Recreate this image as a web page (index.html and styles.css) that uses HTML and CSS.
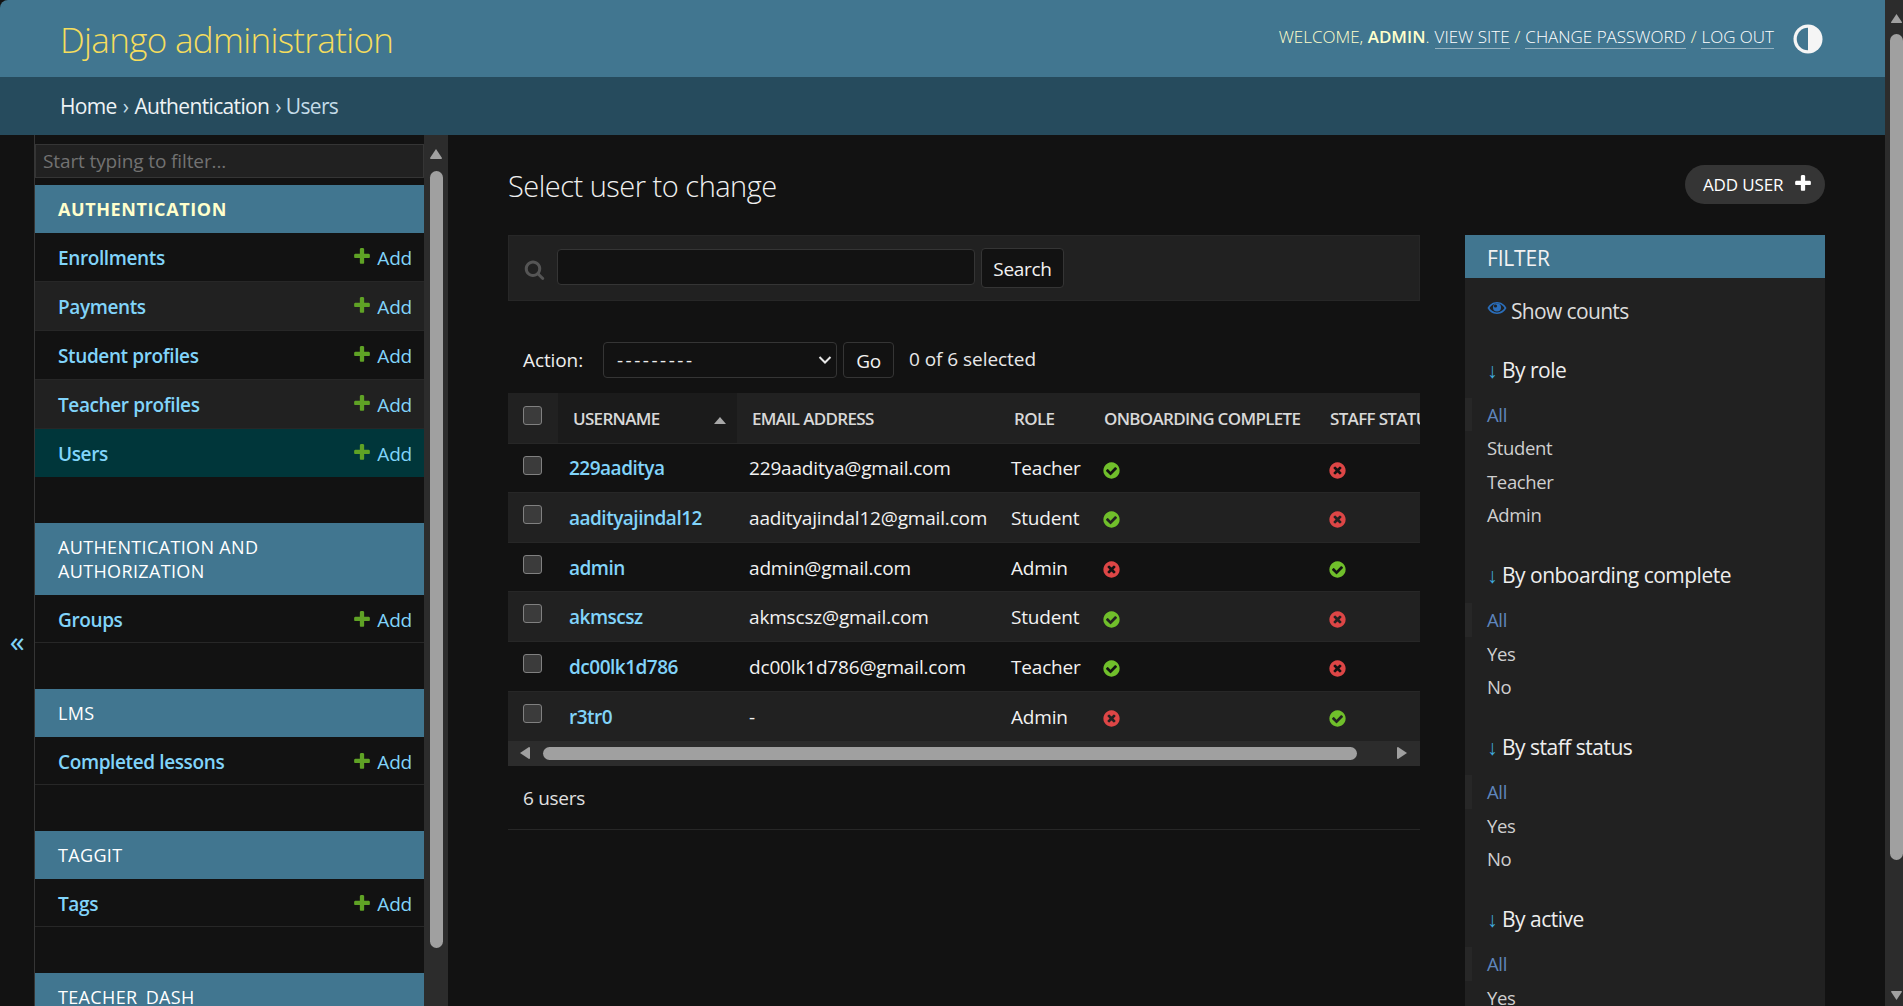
FILE: index.html
```html
<!DOCTYPE html>
<html lang="en">
<head>
<meta charset="utf-8">
<title>Select user to change | Django site admin</title>
<link rel="stylesheet" href="styles.css">
</head>
<body>
<svg class="sprite" aria-hidden="true">
  <symbol id="yes" viewBox="0 0 1792 1792"><path fill="#70bf2b" d="M1412 734q0-28-18-46l-91-90q-19-19-45-19t-45 19l-408 407-226-226q-19-19-45-19t-45 19l-91 90q-18 18-18 46 0 27 18 45l362 362q19 19 45 19 27 0 46-19l543-543q18-18 18-45zm252 162q0 209-103 385.5t-279.5 279.5-385.5 103-385.5-103-279.5-279.5-103-385.5 103-385.5 279.5-279.5 385.5-103 385.5 103 279.5 279.5 103 385.5z"/></symbol>
  <symbol id="no" viewBox="0 0 1792 1792"><path fill="#dd4646" d="M1277 1122q0-26-19-45l-181-181 181-181q19-19 19-45 0-27-19-46l-90-90q-19-19-46-19-26 0-45 19l-181 181-181-181q-19-19-45-19-27 0-46 19l-90 90q-19 19-19 46 0 26 19 45l181 181-181 181q-19 19-19 45 0 27 19 46l90 90q19 19 46 19 26 0 45-19l181-181 181 181q19 19 45 19 27 0 46-19l90-90q19-19 19-46zm387-226q0 209-103 385.5t-279.5 279.5-385.5 103-385.5-103-279.5-279.5-103-385.5 103-385.5 279.5-279.5 385.5-103 385.5 103 279.5 279.5 103 385.5z"/></symbol>
  <symbol id="plus" viewBox="0 0 1792 1792"><path d="M1600 796v192q0 40-28 68t-68 28h-416v416q0 40-28 68t-68 28h-192q-40 0-68-28t-28-68v-416h-416q-40 0-68-28t-28-68v-192q0-40 28-68t68-28h416v-416q0-40 28-68t68-28h192q40 0 68 28t28 68v416h416q40 0 68 28t28 68z"/></symbol>
</svg>

<div class="window">
  <div class="page">
    <header class="header">
      <div class="branding">Django administration</div>
      <div class="user-tools">
        <span>Welcome, <strong>admin</strong>.</span>
        <a href="#">View site</a><span>/</span><a href="#">Change password</a><span>/</span><a href="#">Log out</a>
        <svg class="theme" viewBox="0 0 32 32"><circle cx="16" cy="16" r="15.500" fill="#f5f5f5"/><path d="M16 4a12 12 0 0 0 0 24z" fill="#417690"/></svg>
      </div>
    </header>
    <nav class="crumbs"><a href="#">Home</a> › <a href="#">Authentication</a> › Users</nav>

    <div class="main">
      <div class="toggle"><span>«</span></div>
      <aside class="sidebar">
        <input class="nav-filter" type="text" placeholder="Start typing to filter...">
        <section class="app app-current">
          <h2 class="caption">Authentication</h2>
          <div class="row"><a href="#" class="name">Enrollments</a><a href="#" class="add"><svg class="plus"><use href="#plus"/></svg>Add</a></div>
          <div class="row alt"><a href="#" class="name">Payments</a><a href="#" class="add"><svg class="plus"><use href="#plus"/></svg>Add</a></div>
          <div class="row"><a href="#" class="name">Student profiles</a><a href="#" class="add"><svg class="plus"><use href="#plus"/></svg>Add</a></div>
          <div class="row alt"><a href="#" class="name">Teacher profiles</a><a href="#" class="add"><svg class="plus"><use href="#plus"/></svg>Add</a></div>
          <div class="row current"><a href="#" class="name">Users</a><a href="#" class="add"><svg class="plus"><use href="#plus"/></svg>Add</a></div>
        </section>
        <section class="app">
          <h2 class="caption">Authentication and Authorization</h2>
          <div class="row single"><a href="#" class="name">Groups</a><a href="#" class="add"><svg class="plus"><use href="#plus"/></svg>Add</a></div>
        </section>
        <section class="app">
          <h2 class="caption">LMS</h2>
          <div class="row single"><a href="#" class="name">Completed lessons</a><a href="#" class="add"><svg class="plus"><use href="#plus"/></svg>Add</a></div>
        </section>
        <section class="app">
          <h2 class="caption">Taggit</h2>
          <div class="row single"><a href="#" class="name">Tags</a><a href="#" class="add"><svg class="plus"><use href="#plus"/></svg>Add</a></div>
        </section>
        <section class="app">
          <h2 class="caption">Teacher_dash</h2>
        </section>
      </aside>
      <div class="vbar side-bar">
        <svg class="arrow" viewBox="0 0 14 12"><path d="M7 1 13 10a1 1 0 0 1-1 1H2a1 1 0 0 1-1-1z"/></svg>
        <div class="thumb"></div>
      </div>

      <main class="content">
        <div class="title-row">
          <h1>Select user to change</h1>
          <a href="#" class="addlink">Add user<svg class="plus"><use href="#plus"/></svg></a>
        </div>
        <div class="changelist">
          <div class="results-col">
            <form class="toolbar">
              <svg class="search-icon" viewBox="0 0 1792 1792"><path d="M1216 832q0-185-131.500-316.500t-316.500-131.500-316.500 131.500-131.500 316.500 131.500 316.500 316.500 131.500 316.500-131.500 131.500-316.500zm512 832q0 52-38 90t-90 38q-54 0-90-38l-343-342q-179 124-399 124-143 0-273.500-55.500t-225-150-150-225-55.500-273.500 55.500-273.500 150-225 225-150 273.500-55.500 273.500 55.500 225 150 150 225 55.500 273.500q0 220-124 399l343 343q37 37 37 90z"/></svg>
              <input class="search-input" type="text">
              <button class="btn search-btn" type="button">Search</button>
            </form>
            <div class="actions">
              <label class="action-label">Action:</label>
              <div class="select-wrap">
                <select class="action-select"><option>---------</option></select>
                <svg class="chevron" viewBox="0 0 14 10"><path d="M1.500 2 7 7.500 12.500 2" fill="none" stroke="#e8e8e8" stroke-width="2"/></svg>
              </div>
              <button class="btn go-btn" type="button">Go</button>
              <span class="counter">0 of 6 selected</span>
            </div>
            <div class="table-wrap">
              <table class="results">
                <colgroup><col class="c-check"><col class="c-user"><col class="c-email"><col class="c-role"><col class="c-onb"><col class="c-staff"></colgroup>
                <thead>
                  <tr>
                    <th class="check-cell"><input class="check" type="checkbox"></th>
                    <th class="sorted"><span class="sort-inner">Username<i class="sort-up"></i></span></th>
                    <th>Email address</th>
                    <th>Role</th>
                    <th>Onboarding complete</th>
                    <th>Staff status</th>
                  </tr>
                </thead>
                <tbody>
                  <tr><td class="check-cell"><input class="check" type="checkbox"></td><td><a href="#" class="user">229aaditya</a></td><td>229aaditya@gmail.com</td><td>Teacher</td><td><svg class="bool"><use href="#yes"/></svg></td><td><svg class="bool"><use href="#no"/></svg></td></tr>
                  <tr><td class="check-cell"><input class="check" type="checkbox"></td><td><a href="#" class="user">aadityajindal12</a></td><td>aadityajindal12@gmail.com</td><td>Student</td><td><svg class="bool"><use href="#yes"/></svg></td><td><svg class="bool"><use href="#no"/></svg></td></tr>
                  <tr><td class="check-cell"><input class="check" type="checkbox"></td><td><a href="#" class="user">admin</a></td><td>admin@gmail.com</td><td>Admin</td><td><svg class="bool"><use href="#no"/></svg></td><td><svg class="bool"><use href="#yes"/></svg></td></tr>
                  <tr><td class="check-cell"><input class="check" type="checkbox"></td><td><a href="#" class="user">akmscsz</a></td><td>akmscsz@gmail.com</td><td>Student</td><td><svg class="bool"><use href="#yes"/></svg></td><td><svg class="bool"><use href="#no"/></svg></td></tr>
                  <tr><td class="check-cell"><input class="check" type="checkbox"></td><td><a href="#" class="user">dc00lk1d786</a></td><td>dc00lk1d786@gmail.com</td><td>Teacher</td><td><svg class="bool"><use href="#yes"/></svg></td><td><svg class="bool"><use href="#no"/></svg></td></tr>
                  <tr><td class="check-cell"><input class="check" type="checkbox"></td><td><a href="#" class="user">r3tr0</a></td><td>-</td><td>Admin</td><td><svg class="bool"><use href="#no"/></svg></td><td><svg class="bool"><use href="#yes"/></svg></td></tr>
                </tbody>
              </table>
            </div>
            <div class="hbar">
              <svg class="harrow" viewBox="0 0 12 14"><path d="M1 7 10 1a1 1 0 0 1 1 1v10a1 1 0 0 1-1 1z"/></svg>
              <div class="hthumb"></div>
              <svg class="harrow" viewBox="0 0 12 14"><path d="M11 7 2 13a1 1 0 0 1-1-1V2a1 1 0 0 1 1-1z"/></svg>
            </div>
            <p class="paginator">6 users</p>
          </div>

          <aside class="filter">
            <h2 class="filter-head">Filter</h2>
            <div class="counts"><svg class="eye" viewBox="0 0 20 14"><path d="M10 1C5.500 1 2 4 .5 7 2 10 5.500 13 10 13s8-3 9.500-6C18 4 14.500 1 10 1zm0 1.600c3.300 0 6 2 7.500 4.400-1.500 2.400-4.200 4.400-7.500 4.400S4 9.400 2.500 7C4 4.600 6.700 2.600 10 2.600z" fill="#2a6ebb"/><circle cx="10" cy="6.500" r="4" fill="#2a6ebb"/><circle cx="8.500" cy="5" r="1.600" fill="#212121"/></svg>Show counts</div>
            <h3 class="filter-title"><span class="down">↓</span> By role</h3>
            <ul class="choices"><li class="selected"><a href="#">All</a></li><li><a href="#">Student</a></li><li><a href="#">Teacher</a></li><li><a href="#">Admin</a></li></ul>
            <h3 class="filter-title"><span class="down">↓</span> By onboarding complete</h3>
            <ul class="choices"><li class="selected"><a href="#">All</a></li><li><a href="#">Yes</a></li><li><a href="#">No</a></li></ul>
            <h3 class="filter-title"><span class="down">↓</span> By staff status</h3>
            <ul class="choices"><li class="selected"><a href="#">All</a></li><li><a href="#">Yes</a></li><li><a href="#">No</a></li></ul>
            <h3 class="filter-title"><span class="down">↓</span> By active</h3>
            <ul class="choices"><li class="selected"><a href="#">All</a></li><li><a href="#">Yes</a></li></ul>
          </aside>
        </div>
      </main>
    </div>
  </div>
  <div class="vbar page-bar">
    <svg class="arrow" viewBox="0 0 14 12"><path d="M7 1 13 10a1 1 0 0 1-1 1H2a1 1 0 0 1-1-1z"/></svg>
    <div class="thumb"></div>
    <svg class="arrow arrow-down" viewBox="0 0 14 12"><path d="M7 11 1 2a1 1 0 0 1 1-1h10a1 1 0 0 1 1 1z"/></svg>
  </div>
</div>
</body>
</html>
```
FILE: styles.css
```css
* { box-sizing: border-box; }
html, body { margin: 0; height: 100%; overflow: hidden; }
body {
  background: #121212;
  color: #eeeeee;
  font-family: "Open Sans", "Noto Sans", sans-serif;
  font-size: 19px;
  letter-spacing: -0.35px;
}
a { color: inherit; text-decoration: none; }
h1, h2, h3, p, ul { margin: 0; padding: 0; font: inherit; }
ul { list-style: none; }
.sprite { display: none; }

.window { display: flex; height: 1006px; }
.page { flex: 1; min-width: 0; display: flex; flex-direction: column; }

.header {
  height: 77px;
  flex: none;
  background: #417690;
  border-top-left-radius: 8px;
  display: flex;
  align-items: center;
  justify-content: space-between;
  padding: 0 62px 0 60px;
}
.branding { font-size: 35px; font-weight: 300; color: #f5dd5d; letter-spacing: -0.67px; margin-top: 1px; }
.user-tools {
  display: flex;
  align-items: center;
  gap: 5px;
  font-size: 17px;
  font-weight: 300;
  text-transform: uppercase;
  color: #ffffcc;
  letter-spacing: 0;
  margin-top: -5px;
}
.user-tools strong { font-weight: 600; }
.user-tools a { color: #fff; border-bottom: 1px solid rgba(255,255,255,.45); line-height: 22px; margin-top: 2px; }
.theme { width: 30px; height: 30px; margin: 5px 0 0 14px; }

.crumbs {
  height: 58px;
  flex: none;
  background: #264b5d;
  color: #c4dce8;
  padding-left: 60px;
  display: flex;
  align-items: center;
  gap: 6px;
  font-size: 21px;
  font-weight: 400;
  letter-spacing: -0.65px;
}
.crumbs a { color: #eef3f6; }

.main { flex: 1; min-height: 0; display: flex; }
.toggle {
  width: 35px;
  flex: none;
  border-right: 1px solid #353535;
  color: #81d4fa;
  display: flex;
  align-items: flex-start;
  justify-content: center;
  font-size: 30px;
  line-height: 40px;
  padding-top: 486px;
}
.sidebar {
  width: 389px;
  flex: none;
  padding-top: 9px;
  overflow: hidden;
}
.nav-filter {
  display: block;
  width: 389px;
  height: 34px;
  margin-bottom: 7px;
  padding: 0 7px;
  background: #212121;
  border: 1px solid #353535;
  color: #eee;
  font: inherit;
  letter-spacing: -0.12px;
}
.nav-filter::placeholder { color: #727272; opacity: 1; }

.app { margin-bottom: 46px; }
.caption {
  background: #417690;
  color: #fff;
  font-size: 18px;
  line-height: 24px;
  letter-spacing: 0.35px;
  text-transform: uppercase;
  padding: 12px 23px;
}
.app-current .caption { font-weight: 700; color: #ffffcc; letter-spacing: 0.6px; }
.row {
  height: 49px;
  display: flex;
  align-items: center;
  justify-content: space-between;
  padding: 1px 12px 0 23px;
  border-bottom: 1px solid #272727;
}
.row.alt { background: #212121; }
.row.current { background: #00363a; height: 48px; border-bottom: 0; }
.row.single { height: 48px; padding-top: 3px; }
.name { color: #81d4fa; font-weight: 600; letter-spacing: -0.38px; }
.add { color: #81d4fa; display: flex; align-items: center; gap: 5px; letter-spacing: -0.2px; }
.add .plus { width: 20px; height: 20px; fill: #5fa225; margin-top: -3px; }

.vbar { flex: none; background: #2c2c2c; display: flex; flex-direction: column; align-items: center; }
.arrow { fill: #a0a0a0; display: block; flex: none; }
.thumb { background: #a0a0a0; border-radius: 7px; flex: none; }
.side-bar { width: 24px; padding-top: 13px; }
.side-bar .arrow { width: 14px; height: 12px; }
.side-bar .thumb { width: 13px; height: 777px; margin-top: 11px; }
.page-bar { width: 18px; padding: 13px 0 5px 5px; align-items: flex-start; }
.page-bar .arrow { width: 13px; height: 11px; }
.page-bar .thumb { width: 13px; height: 826px; margin-top: 10px; border-radius: 7px; }
.page-bar .arrow-down { margin-top: auto; }

.content { flex: 1; min-width: 0; padding: 30px 60px 0; overflow: hidden; }
.title-row { height: 39px; display: flex; align-items: center; justify-content: space-between; margin-bottom: 31px; }
.title-row h1 { font-size: 29px; font-weight: 300; letter-spacing: -0.5px; color: #f0f0f0; padding-top: 2px; }
.addlink {
  height: 39px;
  width: 140px;
  border-radius: 20px;
  background: #353535;
  color: #fff;
  font-size: 17px;
  text-transform: uppercase;
  display: flex;
  align-items: center;
  padding-left: 18px;
  gap: 10px;
  letter-spacing: -0.15px;
}
.addlink .plus { width: 20px; height: 20px; fill: #fff; margin-top: -3px; }

.changelist { display: flex; gap: 45px; align-items: flex-start; }
.results-col { width: 912px; flex: none; }
.toolbar {
  height: 66px;
  background: #212121;
  border: 1px solid #272727;
  display: flex;
  align-items: center;
  padding: 0 0 0 15px;
  margin-bottom: 41px;
}
.search-icon { width: 21px; height: 21px; fill: #555; margin-right: 12px; margin-top: 3px; }
.search-input {
  width: 418px;
  height: 36px;
  background: #121212;
  border: 1px solid #353535;
  border-radius: 4px;
  margin: -3px 6px 0 0;
}
.btn {
  background: #121212;
  color: #f2f2f2;
  border: 1px solid #353535;
  border-radius: 4px;
  font: inherit;
  letter-spacing: -0.3px;
  padding: 1px 0 0;
}
.search-btn { width: 83px; height: 40px; }

.actions { height: 36px; display: flex; align-items: center; padding-left: 15px; margin-bottom: 15px; }
.action-label { width: 80px; flex: none; color: #eee; letter-spacing: -0.1px; }
.select-wrap { position: relative; width: 234px; height: 36px; margin-right: 6px; }
.action-select {
  appearance: none;
  width: 100%;
  height: 100%;
  background: #121212;
  color: #eee;
  border: 1px solid #353535;
  border-radius: 4px;
  font: inherit;
  letter-spacing: 2.5px;
  padding: 0 0 0 13px;
}
.chevron { position: absolute; right: 5px; top: 13px; width: 14px; height: 10px; }
.go-btn { width: 51px; height: 36px; margin-right: 15px; }
.counter { margin-top: -3px; color: #e8e8e8; letter-spacing: -0.05px; }

.table-wrap { overflow: hidden; width: 912px; }
.results { table-layout: fixed; border-collapse: collapse; width: 1120px; font-size: 19px; letter-spacing: -0.17px; }
.c-check { width: 50px; }
.c-user { width: 179px; }
.c-email { width: 262px; }
.c-role { width: 90px; }
.c-onb { width: 226px; }
.c-staff { width: 313px; }
.results th {
  height: 50px;
  background: #212121;
  border-bottom: 1px solid #272727;
  text-align: left;
  padding: 2px 0 0 15px;
  font-size: 17px;
  font-weight: 600;
  color: #d8d8d8;
  text-transform: uppercase;
  white-space: nowrap;
  letter-spacing: -0.68px;
}
.results th.sorted { background: #1b1b1b; padding-right: 11px; }
.sort-inner { display: flex; align-items: center; justify-content: space-between; }
.sort-up { width: 0; height: 0; border: 6.5px solid transparent; border-top: 0; border-bottom: 7px solid #a8a8a8; margin-top: 3px; }
.results th.check-cell, .results td.check-cell { padding: 0 0 0 15px; vertical-align: top; }
.results td {
  height: 49.67px;
  padding: 1px 0 0 12px;
  border-bottom: 1px solid #272727;
  white-space: nowrap;
  color: #f2f2f2;
}
.results tbody tr:nth-child(even) td { background: #212121; }
.results tbody tr:last-child td { border-bottom: 0; }
.user { color: #81d4fa; font-weight: 600; letter-spacing: -0.5px; margin-left: -1px; }
.check {
  appearance: none;
  display: block;
  width: 19px;
  height: 19px;
  margin: 12px 0 0;
  background: #3b3b3b;
  border: 1.5px solid #808080;
  border-radius: 3px;
}
.results th .check { margin-top: 13px; }
.bool { width: 19px; height: 19px; display: block; margin: 4px 0 0 1px; }

.hbar { height: 25px; background: #2c2c2c; display: flex; align-items: center; padding: 0 12px 0 11px; }
.harrow { width: 12px; height: 14px; fill: #a0a0a0; flex: none; }
.hthumb { width: 814px; height: 13px; background: #a0a0a0; border-radius: 7px; margin: 0 auto 0 12px; }

.paginator { height: 64px; line-height: 65px; padding-left: 15px; border-bottom: 1px solid #272727; color: #e0e0e0; letter-spacing: -0.3px; }

.filter {
  width: 360px;
  flex: none;
  height: 771px;
  background: #212121;
  overflow: hidden;
}
.filter-head {
  height: 43px;
  line-height: 47px;
  background: #417690;
  color: #f2f2f2;
  font-size: 21px;
  text-transform: uppercase;
  padding-left: 22px;
  letter-spacing: -0.2px;
}
.counts { height: 66px; display: flex; align-items: center; padding: 0 0 0 22px; color: #dcdcdc; gap: 4px; font-size: 21px; letter-spacing: -0.65px; }
.eye { width: 20px; height: 14px; margin-top: -6px; }
.filter-title { height: 34px; line-height: 34px; padding-left: 22px; color: #eee; font-size: 21px; letter-spacing: -0.5px; margin-top: 9px; }
.down { color: #3fa9dc; }
.choices { margin: 11px 0 27px; }
.choices li { height: 33.33px; line-height: 33.33px; padding-left: 22px; color: #cfcfcf; font-size: 18.5px; letter-spacing: -0.35px; }
.choices li.selected { color: #5f86bd; border-left: 7px solid #272727; padding-left: 15px; }
```
